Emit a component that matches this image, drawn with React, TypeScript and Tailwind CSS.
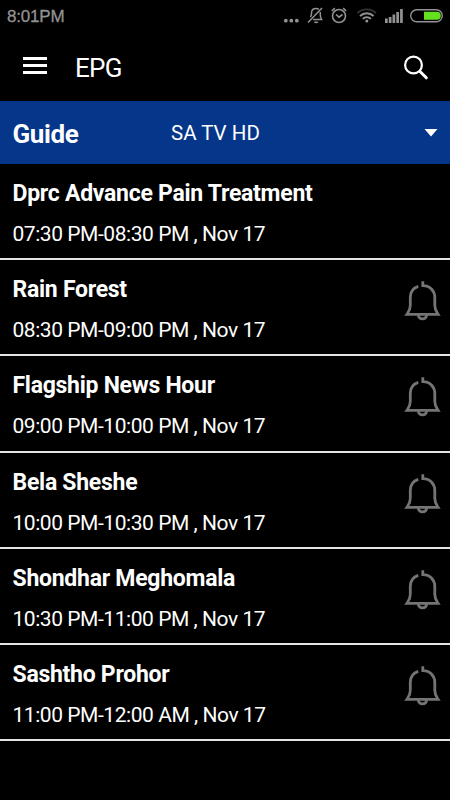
const programmes = [
  { title: 'Dprc Advance Pain Treatment', time: '07:30 PM-08:30 PM , Nov 17', bell: false },
  { title: 'Rain Forest', time: '08:30 PM-09:00 PM , Nov 17', bell: true },
  { title: 'Flagship News Hour', time: '09:00 PM-10:00 PM , Nov 17', bell: true },
  { title: 'Bela Sheshe', time: '10:00 PM-10:30 PM , Nov 17', bell: true },
  { title: 'Shondhar Meghomala', time: '10:30 PM-11:00 PM , Nov 17', bell: true },
  { title: 'Sashtho Prohor', time: '11:00 PM-12:00 AM , Nov 17', bell: true },
];

function Bell() {
  return (
    <svg className="mt-[20px] h-[42px] w-[38px] shrink-0" viewBox="0 0 38 42" fill="none" stroke="#747474" strokeWidth="2.8">
      <path d="M15.300 6.400C10 8 7.300 12 7.300 17.500v8c0 3.500-1 5.800-3.300 8.800h31c-2.200-3-3.200-5.300-3.200-8.800v-8C31.800 11 27.500 5.800 19.800 5.600V1.200" />
      <path d="M15.300 35c.3 2.600 1.900 3.900 4.200 3.900s3.900-1.300 4.200-3.900" />
    </svg>
  );
}

function StatusIcons() {
  return (
    <svg className="h-[24px] w-[170px]" viewBox="280 4 170 24" fill="none" stroke="#929292" strokeWidth="1.4">
      <g fill="#929292" stroke="none">
        <circle cx="285.800" cy="20.700" r="1.900" />
        <circle cx="291.300" cy="20.700" r="1.900" />
        <circle cx="296.800" cy="20.700" r="1.900" />
      </g>
      <path d="M310.500 17c.8-1.300 1-2.500 1-4 0-3 1.600-4.400 4.600-4.400 1 0 1.900.2 2.700.8M320.300 12v3c0 2 .5 3 1.300 4.500h-8.500M314.500 21.700c.8 1 2.500 1 3.300 0M308 22.500 322 8" strokeWidth="1.500" />
      <circle cx="339" cy="16" r="6.500" strokeWidth="1.600" />
      <path d="M336 14.500l3 2.700 3.500-2.700M331.800 11l3-2.800M346.200 11l-3-2.800" strokeWidth="1.600" />
      <path d="M357.500 13c5-4.800 13.500-4.800 18.500 0" stroke="#343434" strokeWidth="1.800" />
      <path d="M360 16c3.800-3.700 9.800-3.700 13.600 0M362.800 18.900c2.300-2.200 5.800-2.200 8.100 0" strokeWidth="1.900" />
      <circle cx="366.800" cy="21" r="1.500" fill="#929292" stroke="none" />
      <g fill="#929292" stroke="none">
        <path d="M385 18.500h2.700V23H385zM388.800 17h2.700v6h-2.700zM392.500 14.500h2.700V23h-2.700zM396.300 12h2.700v11h-2.700zM400.100 9h2.700v14h-2.700z" />
      </g>
      <rect x="410.700" y="9.700" width="31.600" height="12" rx="6" />
      <path d="M424 11.700h12.800a4 4 0 0 1 0 8H424z" fill="#65e01c" stroke="none" />
    </svg>
  );
}

export default function App() {
  return (
    <div className="h-[800px] w-[450px] overflow-hidden bg-black font-['Roboto',sans-serif] text-white">
      <div className="flex h-[32px] items-center justify-between pl-[7px]">
        <span className="pt-px font-['Liberation_Sans',sans-serif] text-[17px] leading-[32px] tracking-[-0.2px] text-[#929292] [-webkit-text-stroke:0.3px_#929292]">8:01PM</span>
        <StatusIcons />
      </div>
      <header className="flex h-[69px] items-center pl-[23px] pr-[21px]">
        <div className="mb-[2px] flex w-[24px] flex-col gap-[4px]">
          <div className="h-[3px] bg-white" />
          <div className="h-[3px] bg-white" />
          <div className="h-[3px] bg-white" />
        </div>
        <h1 className="ml-[28px] mt-[3px] flex-1 text-[26px] leading-[32px] tracking-[-0.7px]">EPG</h1>
        <svg className="h-[26px] w-[26px]" viewBox="0 0 26 26" fill="none" stroke="white">
          <circle cx="10.500" cy="11" r="8.400" strokeWidth="2.200" />
          <path d="M17 17.500l6.300 6.300" strokeWidth="3" strokeLinecap="round" />
        </svg>
      </header>
      <div className="flex h-[63px] items-center bg-[#053689] pl-[12.500px] pr-[12px]">
        <span className="w-[158.500px] pt-[3px] text-[26px] font-bold tracking-[-0.4px]">Guide</span>
        <span className="flex-1 pt-[2px] text-[20.5px]">SA TV HD</span>
        <svg className="h-[8px] w-[14px]" viewBox="0 0 14 8" fill="white"><path d="M.5 0h13L7 7.500z" /></svg>
      </div>
      <main>
        {programmes.map((p) => (
          <section key={p.title} className="flex h-[96.200px] justify-between border-b-2 border-[#e4e4e4] pl-[12.500px] pr-[9px]">
            <div className="pt-[13px]">
              <h2 className="text-[23px] font-bold leading-[34px] tracking-[-0.27px]">{p.title}</h2>
              <p className="mt-[6px] text-[21px] leading-[34px] tracking-[-0.45px]">{p.time}</p>
            </div>
            {p.bell && <Bell />}
          </section>
        ))}
      </main>
    </div>
  );
}
